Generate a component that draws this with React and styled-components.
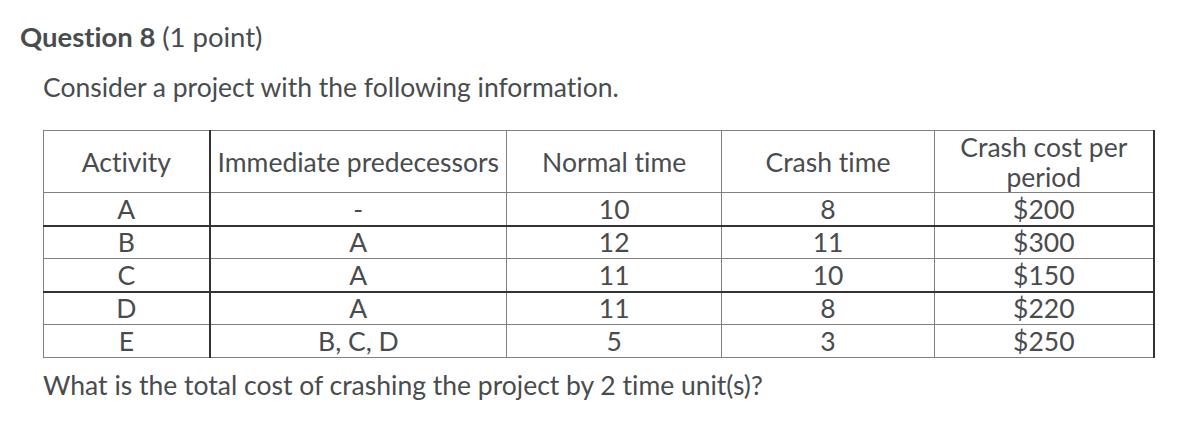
import React from 'react';
import styled, { createGlobalStyle } from 'styled-components';

const GlobalStyle = createGlobalStyle`
    body {
        margin: 0;
        background: #ffffff;
        font-family: Lato, "Open Sans", sans-serif;
        font-variant-ligatures: none;
        color: #494c4e;
    }
`;

const Page = styled.div`
    padding: 18px 32px 0 20px;
`;

const Heading = styled.h2`
    margin: 0;
    font-size: 27.5px;
    font-weight: 700;
    line-height: 38px;
`;

const Points = styled.span`
    font-weight: 400;
`;

const Body = styled.div`
    padding: 14px 0 0 23px;
`;

const Text = styled.p`
    margin: 0;
    font-size: 26.5px;
    line-height: 34px;
`;

const Table = styled.table`
    margin: 26px 0 0 0;
    border-collapse: collapse;
    font-size: 26.5px;
    table-layout: fixed;
`;

const Cell = styled.td`
    border: 1px solid #808080;
    border-right: ${p => (p.$strongRight ? '2px solid #333' : '1px solid #808080')};
    border-bottom: ${p => (p.$strongBottom ? '2px solid #333' : '1px solid #808080')};
    text-align: center;
    vertical-align: middle;
    padding: 0;
    line-height: 30px;
    height: ${p => (p.$head ? '61px' : '31.5px')};
    width: ${p => p.$w}px;
`;

const Question = styled(Text)`
    margin-top: 10px;
`;

const widths = [165, 296, 215, 212, 219];

const rows = [
    ['A', '-', '10', '8', '$200'],
    ['B', 'A', '12', '11', '$300'],
    ['C', 'A', '11', '10', '$150'],
    ['D', 'A', '11', '8', '$220'],
    ['E', 'B, C, D', '5', '3', '$250'],
];

// rows followed by a heavier rule
const strongAfter = [0, 2];

const App = () => {
    return (
        <Page>
            <GlobalStyle />
            <Heading>Question 8 <Points>(1 point)</Points></Heading>
            <Body>
                <Text>Consider a project with the following information.</Text>
                <Table>
                    <tbody>
                        <tr>
                            <Cell $head $w={widths[0]} $strongRight>Activity</Cell>
                            <Cell $head $w={widths[1]}>Immediate predecessors</Cell>
                            <Cell $head $w={widths[2]}>Normal time</Cell>
                            <Cell $head $w={widths[3]}>Crash time</Cell>
                            <Cell $head $w={widths[4]} $strongRight>Crash cost per<br />period</Cell>
                        </tr>
                        {rows.map((row, i) => (
                            <tr key={row[0]}>
                                {row.map((val, j) => (
                                    <Cell
                                        key={j}
                                        $w={widths[j]}
                                        $strongRight={j === 0 || j === 4}
                                        $strongBottom={strongAfter.includes(i)}
                                    >
                                        {val}
                                    </Cell>
                                ))}
                            </tr>
                        ))}
                    </tbody>
                </Table>
                <Question>What is the total cost of crashing the project by 2 time unit(s)?</Question>
            </Body>
        </Page>
    );
};

export default App;
